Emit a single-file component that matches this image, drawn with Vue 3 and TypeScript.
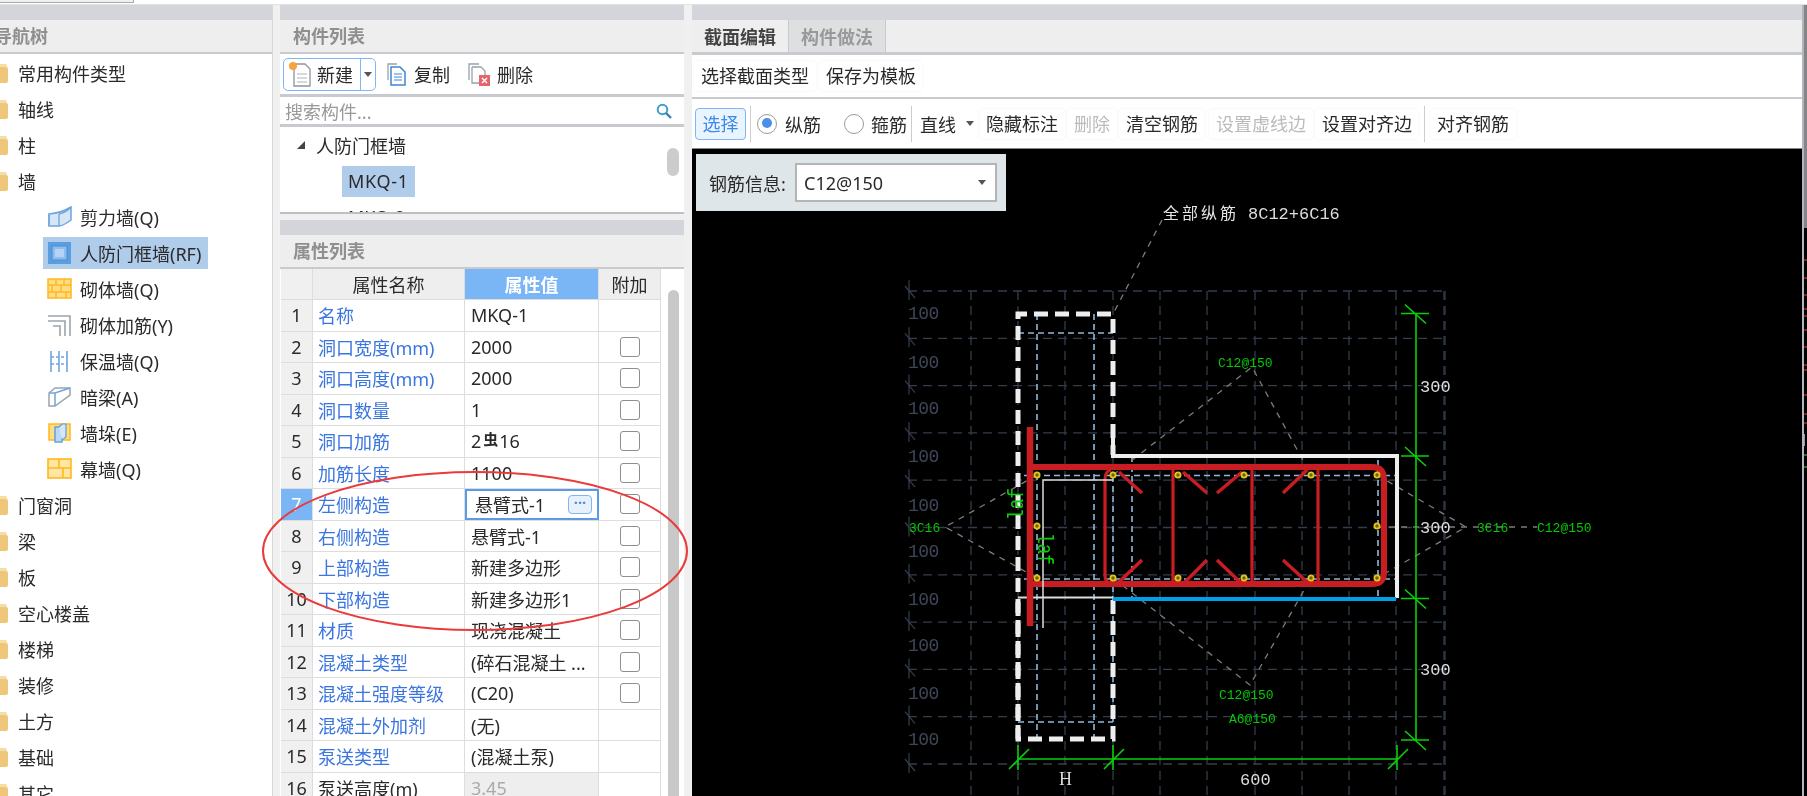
<template>
  <div class="root">
    <div class="top-strip"><div class="top-box"></div></div>
    <div class="main">
      <section class="panel nav-panel">
        <div class="bar"></div>
        <div class="head"><span class="title nav-title">导航树</span></div>
        <ul class="tree">
          <li v-for="item in tree" :key="item.label" class="tree-row" :class="{ child: item.icon }">
            <svg v-if="!item.icon" class="folder" width="18" height="20" viewBox="0 0 18 20">
              <path d="M1 1h14a2 2 0 0 1 2 2v1H1z" fill="#f6dca6" />
              <rect x="0" y="4" width="18" height="16" rx="2" fill="#efc77a" />
              <rect x="2" y="10" width="5" height="4" fill="#c9a050" />
            </svg>
            <span v-if="item.icon" class="child-wrap" :class="{ selected: item.selected }">
              <svg class="tree-icon" width="26" height="22" viewBox="0 0 26 22">
                <template v-if="item.icon === 'shear'">
                  <path d="M2 8q12-1 22-7v13q-8 6-12 6H2z" fill="#d6e6f6" stroke="#6fa5dc" stroke-width="1.5" />
                  <path d="M2 8v12M12 8v12M12 8q8-2 12-7" fill="none" stroke="#6fa5dc" stroke-width="1.3" />
                </template>
                <template v-else-if="item.icon === 'frame'">
                  <rect x="1" y="0" width="23" height="22" fill="#5a9ee2" />
                  <rect x="5" y="4" width="15" height="14" fill="#8dbdec" stroke="#4a8ed6" />
                  <rect x="8" y="7" width="9" height="8" fill="#b6d4f2" />
                </template>
                <template v-else-if="item.icon === 'brick'">
                  <rect x="1" y="1" width="23" height="19" fill="#ffdd85" stroke="#ffb81f" stroke-width="1.5" />
                  <path d="M1 7h23M1 14h23M9 1v6M17 1v6M5 7v7M14 7v7M9 14v6M19 14v6" stroke="#ffb81f" stroke-width="1.5" />
                </template>
                <template v-else-if="item.icon === 'rebar'">
                  <path d="M1 2h22v20M1 7h17v15M6 12h7v10" fill="none" stroke="#9aa4ad" stroke-width="1.6" />
                </template>
                <template v-else-if="item.icon === 'insul'">
                  <path d="M4 1v21M12 1v21M20 1v21" fill="none" stroke="#6fa5dc" stroke-width="1.6" />
                  <path d="M4 7h16M4 14h16" fill="none" stroke="#6fa5dc" stroke-width="1.4" stroke-dasharray="3 2" />
                </template>
                <template v-else-if="item.icon === 'beam'">
                  <path d="M2 7l6-5h15v7l-15 11H2z" fill="#fff" stroke="#9aa4ad" stroke-width="1.5" />
                  <path d="M2 7h6l15-5M8 7v13" fill="none" stroke="#6fa5dc" stroke-width="1.5" />
                </template>
                <template v-else-if="item.icon === 'pier'">
                  <rect x="2" y="2" width="21" height="16" fill="#ffdd85" stroke="#ffb81f" stroke-width="1.5" />
                  <rect x="8" y="5" width="7" height="15" fill="#bcd8f3" stroke="#5a9ee2" stroke-width="1.4" />
                  <path d="M12 5l3-3h4v13l-4 3" fill="#d6e6f6" stroke="#5a9ee2" stroke-width="1.2" />
                </template>
                <template v-else>
                  <rect x="1" y="1" width="23" height="19" fill="#ffe6a3" stroke="#ffb81f" stroke-width="1.6" />
                  <path d="M1 10h23M12 1v9M16 10v10" stroke="#ffb81f" stroke-width="1.6" />
                </template>
              </svg>
              <span>{{ item.label }}</span>
            </span>
            <span v-else>{{ item.label }}</span>
          </li>
        </ul>
      </section>

      <div class="mid-col">
        <section class="panel list-panel">
          <div class="bar"></div>
          <div class="head"><span class="title">构件列表</span></div>
          <div class="mid-tools">
            <div class="split-btn">
              <div class="split-main">
                <svg width="22" height="26" viewBox="0 0 22 26">
                  <path d="M5 3h11l5 5v17H5z" fill="#fff" stroke="#8d949b" stroke-width="1.3" />
                  <path d="M8 13h10M8 17h10M8 21h10" stroke="#c7ccd1" stroke-width="1.3" />
                  <circle cx="4" cy="5" r="4" fill="#f7a33c" />
                </svg>
                <span>新建</span>
              </div>
              <div class="split-arrow"><i class="caret"></i></div>
            </div>
            <div class="tool-btn copy-btn">
              <svg width="19" height="23" viewBox="0 0 19 23">
                <path d="M1 17V1h9" fill="none" stroke="#9aa1a8" stroke-width="1.3" />
                <path d="M4 4h9l5 5v13H4z" fill="#fff" stroke="#3f87d1" stroke-width="1.5" />
                <path d="M7 11h8M7 14h8M7 17h8" stroke="#3f87d1" stroke-width="1.2" />
              </svg>
              <span>复制</span>
            </div>
            <div class="tool-btn del-btn">
              <svg width="23" height="23" viewBox="0 0 23 23">
                <path d="M1 17V1h10" fill="none" stroke="#9aa1a8" stroke-width="1.3" />
                <path d="M4 4h9l4 4v6" fill="#fff" stroke="#9aa1a8" stroke-width="1.3" />
                <path d="M4 4v16h7" fill="none" stroke="#9aa1a8" stroke-width="1.3" />
                <rect x="11" y="12" width="11" height="11" fill="#e2666a" />
                <path d="M14 15l5 5M19 15l-5 5" stroke="#fff" stroke-width="1.4" />
              </svg>
              <span>删除</span>
            </div>
          </div>
          <div class="search">
            <span>搜索构件...</span>
            <svg width="16" height="16" viewBox="0 0 16 16">
              <circle cx="6.5" cy="6.5" r="4.8" fill="none" stroke="#3f9fc8" stroke-width="2" />
              <path d="M10 10l5 5" stroke="#3f7fa8" stroke-width="2.4" />
            </svg>
          </div>
          <div class="comp-list">
            <div class="comp-group"><i class="tri"></i>人防门框墙</div>
            <div class="comp-item"><span class="comp-sel">MKQ-1</span></div>
            <div class="comp-item"><span class="comp-plain">MKQ-2</span></div>
            <div class="comp-thumb"></div>
          </div>
        </section>

        <section class="panel prop-panel">
          <div class="bar"></div>
          <div class="head"><span class="title">属性列表</span></div>
          <div class="prop-body">
            <div class="prop-table">
              <div class="prop-row prop-header">
                <div class="cell num"></div>
                <div class="cell center">属性名称</div>
                <div class="cell center val-head">属性值</div>
                <div class="cell center">附加</div>
              </div>
              <div v-for="(row, i) in props" :key="row.name" class="prop-row">
                <div class="cell num" :class="{ 'num-active': i === 6 }">{{ i + 1 }}</div>
                <div class="cell name" :class="{ 'name-plain': i === 15 }">{{ row.name }}</div>
                <div v-if="i === 6" class="cell value-edit">
                  <span>{{ row.value }}</span>
                  <span class="more-btn">···</span>
                </div>
                <div v-else-if="i === 4" class="cell value">2<span class="bar-mark">虫</span>16</div>
                <div v-else class="cell value" :class="{ readonly: i === 15 }">{{ row.value }}</div>
                <div class="cell center"><i v-if="row.check" class="check"></i></div>
              </div>
            </div>
            <div class="prop-scroll"><div class="prop-thumb"></div></div>
          </div>
        </section>
      </div>

      <section class="panel edit-panel">
        <div class="bar"></div>
        <div class="head tabs">
          <div class="tab tab-on">截面编辑</div>
          <div class="tab tab-off">构件做法</div>
        </div>
        <div class="edit-tools-a">
          <div class="flat-btn">选择截面类型</div>
          <div class="flat-btn">保存为模板</div>
        </div>
        <div class="edit-tools-b">
          <div class="pick-btn">选择</div>
          <i class="sep sep-a"></i>
          <label class="radio radio-a"><i class="dot dot-on"></i>纵筋</label>
          <label class="radio radio-b"><i class="dot"></i>箍筋</label>
          <i class="sep sep-b"></i>
          <span class="line-pick">直线</span>
          <i class="caret caret-line"></i>
          <div class="flat-btn">隐藏标注</div>
          <div class="flat-btn off">删除</div>
          <div class="flat-btn">清空钢筋</div>
          <div class="flat-btn off wide-l">设置虚线边</div>
          <div class="flat-btn">设置对齐边</div>
          <i class="sep sep-c"></i>
          <div class="flat-btn last-btn">对齐钢筋</div>
        </div>
        <div class="canvas">
          <svg class="drawing" width="1110" height="647" viewBox="692 149 1110 647">
            <g stroke="#343d4c" stroke-width="1.3" stroke-dasharray="9 6" fill="none">
              <path v-for="y in gridY" :key="'h' + y" :d="`M908 ${y}H1445`" />
              <path v-for="x in gridX" :key="'v' + x" :d="`M${x} 291V796`" />
            </g>
            <g stroke="#343d4c" stroke-width="1.2">
              <path v-for="y in gridY" :key="'t' + y" :d="`M905 ${y - 5}L915 ${y + 7}M909 ${y - 11}V${y + 9}`" />
            </g>
            <text v-for="y in hundredY" :key="'l' + y" x="908" :y="y + 6" class="t-grid">100</text>

            <g fill="none" stroke="#8fb8dc" stroke-width="1.6" stroke-dasharray="6 4">
              <path d="M1037 314V739M1094 314V739M1018 333H1113M1018 722H1113" />
              <path d="M1024 475.5H1397M1024 579H1397M1113 476V739M1132 456V600M1378 460V600" />
            </g>

            <g fill="none" stroke="#7c7c7c" stroke-width="1.3" stroke-dasharray="6 6">
              <path d="M1162 220L1113 314" />
              <path d="M1113 475L1252 367L1311 475" />
              <path d="M1113 578L1250 685L1311 578" />
              <path d="M1037 475L945 527L1037 578" />
              <path d="M1377 475L1466 527L1377 578" />
              <path d="M1377 527H1537" />
            </g>

            <path d="M1018 739V314H1113V455" fill="none" stroke="#eee" stroke-width="5" stroke-dasharray="14 7" />
            <path d="M1113 600V739H1018V600" fill="none" stroke="#eee" stroke-width="5" stroke-dasharray="14 7" />
            <path d="M1113 437V456H1397V598" fill="none" stroke="#eee" stroke-width="4" />
            <path d="M1018 597.5H1113" stroke="#ddd" stroke-width="2" />
            <path d="M1113 599H1396" stroke="#00a0e9" stroke-width="4" />

            <g fill="none" stroke="#c81e23">
              <path d="M1030 427V626" stroke-width="6.5" />
              <path d="M1033 467H1372Q1384 467 1384 480V572Q1384 584 1372 584H1033" stroke-width="6" />
              <path d="M1111 470Q1105 471 1105 480V576Q1105 582 1111 584" stroke-width="3.2" />
              <path v-for="x in stirrupX" :key="'s' + x" :d="`M${x} 468V584`" stroke-width="3.2" />
              <path v-for="(d, i) in hooks" :key="'k' + i" :d="d" stroke-width="3.4" />
            </g>
            <path d="M1113 480H1043V628" fill="none" stroke="#ddd" stroke-width="1.5" />
            <circle
              v-for="(b, i) in bars"
              :key="'b' + i"
              :cx="b[0]"
              :cy="b[1]"
              r="2.6"
              fill="#6b5f10"
              stroke="#e6c619"
              stroke-width="1.8"
            />

            <g fill="none" stroke="#0ad00a" stroke-width="1.6">
              <path d="M1416 313V740M1018 759H1397" />
              <path v-for="y in [313.5, 456, 598.5, 740]" :key="'g' + y" :d="`M1401 ${y}H1429M1405 ${y - 9}L1426 ${y + 10}`" />
              <path v-for="x in [1018, 1113, 1397]" :key="'x' + x" :d="`M${x} 745V770M${x - 9} 769L${x + 11} 749`" />
            </g>

            <text x="1163" y="219" class="t-cn">全部纵筋</text>
            <text x="1248" y="219" class="t-dim">8C12+6C16</text>
            <text x="1059" y="785" class="t-dim t-serif">H</text>
            <text x="1240" y="785" class="t-dim">600</text>
            <text v-for="y in [392, 533, 675]" :key="'d' + y" x="1420" :y="y" class="t-dim">300</text>

            <text x="1218" y="367" class="t-green">C12@150</text>
            <text x="909" y="532" class="t-green">3C16</text>
            <text x="1477" y="532" class="t-green">3C16</text>
            <text x="1537" y="532" class="t-green">C12@150</text>
            <text x="1219" y="699" class="t-green">C12@150</text>
            <text x="1229" y="723" class="t-green">A6@150</text>
            <text class="t-laf" textLength="32" lengthAdjust="spacingAndGlyphs" transform="translate(1023 520) rotate(-90)">laf</text>
            <text class="t-laf" textLength="32" lengthAdjust="spacingAndGlyphs" transform="translate(1038 533) rotate(90)">laf</text>
          </svg>
          <div class="bar-info">
            <span class="info-label">钢筋信息:</span>
            <div class="info-select">
              <span>C12@150</span>
              <i class="caret"></i>
            </div>
          </div>
        </div>
      </section>

      <div class="edge">
        <div class="edge-top"></div>
        <svg class="edge-ticks" width="3" height="568" viewBox="0 228 3 568">
          <path v-for="y in edgeRed" :key="y" :d="`M0 ${y}H3`" stroke="#a8262b" stroke-width="1.5" />
          <path d="M0 455H3M0 467H3" stroke="#2f8f3f" stroke-width="1.5" />
          <path d="M0 434V446" stroke="#999" stroke-width="2" />
        </svg>
      </div>
    </div>

    <svg class="mark" width="1807" height="796" viewBox="0 0 1807 796">
      <ellipse cx="475" cy="551" rx="212" ry="79" fill="none" stroke="#ea3b3b" stroke-width="2" />
    </svg>
  </div>
</template>

<script setup lang="ts">
interface TreeItem {
  label: string
  icon?: string
  selected?: boolean
}

interface PropRow {
  name: string
  value: string
  check: boolean
}

const tree: TreeItem[] = [
  { label: '常用构件类型' },
  { label: '轴线' },
  { label: '柱' },
  { label: '墙' },
  { label: '剪力墙(Q)', icon: 'shear' },
  { label: '人防门框墙(RF)', icon: 'frame', selected: true },
  { label: '砌体墙(Q)', icon: 'brick' },
  { label: '砌体加筋(Y)', icon: 'rebar' },
  { label: '保温墙(Q)', icon: 'insul' },
  { label: '暗梁(A)', icon: 'beam' },
  { label: '墙垛(E)', icon: 'pier' },
  { label: '幕墙(Q)', icon: 'curtain' },
  { label: '门窗洞' },
  { label: '梁' },
  { label: '板' },
  { label: '空心楼盖' },
  { label: '楼梯' },
  { label: '装修' },
  { label: '土方' },
  { label: '基础' },
  { label: '其它' }
]

const props: PropRow[] = [
  { name: '名称', value: 'MKQ-1', check: false },
  { name: '洞口宽度(mm)', value: '2000', check: true },
  { name: '洞口高度(mm)', value: '2000', check: true },
  { name: '洞口数量', value: '1', check: true },
  { name: '洞口加筋', value: '', check: true },
  { name: '加筋长度', value: '1100', check: true },
  { name: '左侧构造', value: '悬臂式-1', check: true },
  { name: '右侧构造', value: '悬臂式-1', check: true },
  { name: '上部构造', value: '新建多边形', check: true },
  { name: '下部构造', value: '新建多边形1', check: true },
  { name: '材质', value: '现浇混凝土', check: true },
  { name: '混凝土类型', value: '(碎石混凝土 ...', check: true },
  { name: '混凝土强度等级', value: '(C20)', check: true },
  { name: '混凝土外加剂', value: '(无)', check: false },
  { name: '泵送类型', value: '(混凝土泵)', check: false },
  { name: '泵送高度(m)', value: '3.45', check: false }
]

const gridY = Array.from({ length: 11 }, (_, i) => Math.round((291 + i * 47.3) * 10) / 10)
const hundredY = [313, 362, 408, 456, 505, 551, 599, 645, 693, 739]
const gridX = [971, ...Array.from({ length: 10 }, (_, i) => Math.round(1018 + i * 47.3)), 1445]

const stirrupX = [1173, 1252, 1318]

const hooks = [
  'M1119 472L1142 493',
  'M1183 472L1207 493',
  'M1242 472L1217 493',
  'M1307 470L1283 493',
  'M1119 582L1142 560',
  'M1185 582L1207 560',
  'M1240 582L1217 560',
  'M1307 582L1283 560'
]

const bars: [number, number][] = [
  [1037, 475], [1113, 475], [1178, 475], [1244, 475], [1311, 475], [1377, 475],
  [1037, 526], [1377, 526],
  [1037, 578], [1113, 578], [1178, 578], [1244, 578], [1311, 578], [1377, 578]
]

const edgeRed = [260, 278, 295, 309, 316, 330, 347, 365, 370, 395, 414, 423]
</script>

<style scoped>
.root {
  position: relative;
  width: 1807px;
  height: 796px;
  overflow: hidden;
  display: flex;
  flex-direction: column;
  background: #f0f0f0;
  color: #2a2a2a;
  font-family: "Noto Sans", "Noto Sans CJK SC", sans-serif;
  font-size: 18px;
  filter: blur(0.45px);
}

.top-strip {
  height: 5px;
  flex: none;
  background: #fff;
  border-bottom: 1px solid #e2e2e2;
  box-sizing: border-box;
}

.top-box {
  width: 133px;
  height: 2px;
  background: #f0f0f0;
  border-bottom: 1px solid #aaa;
  border-right: 1px solid #aaa;
}

.main {
  flex: 1;
  min-height: 0;
  display: flex;
}

.panel {
  display: flex;
  flex-direction: column;
  background: #fff;
  min-height: 0;
}

.bar {
  height: 15px;
  flex: none;
  background: #d3d5da;
}

.head {
  height: 32px;
  flex: none;
  display: flex;
  align-items: center;
  background: #eee;
  border-bottom: 2px solid #c8cacf;
  box-sizing: content-box;
}

.title {
  margin-left: 13px;
  color: #8f8f8f;
  font-weight: 700;
  line-height: 32px;
}

.nav-title {
  margin-left: -6px;
}

.nav-panel {
  width: 273px;
  flex: none;
  border-right: 1px solid #d8d8d8;
  box-sizing: border-box;
  overflow: hidden;
}

.tree {
  list-style: none;
  margin: 0;
  padding: 1px 0 0;
}

.tree-row {
  height: 36px;
  display: flex;
  align-items: center;
  white-space: nowrap;
}

.folder {
  margin-left: -10px;
  margin-right: 10px;
  flex: none;
}

.child-wrap {
  display: flex;
  align-items: center;
  height: 32px;
  margin-left: 43px;
  padding: 0 7px 0 4px;
}

.child-wrap.selected {
  background: #b0cceb;
}

.tree-icon {
  margin-right: 7px;
  flex: none;
}

.mid-col {
  width: 404px;
  flex: none;
  margin-left: 7px;
  display: flex;
  flex-direction: column;
}

.list-panel {
  height: 209px;
  flex: none;
  border-bottom: 2px solid #bdbfc4;
  box-sizing: border-box;
  margin-bottom: 6px;
}

.mid-tools {
  height: 40px;
  flex: none;
  display: flex;
  align-items: center;
  padding-left: 3px;
  border-bottom: 3px solid #c8cacf;
}

.split-btn {
  width: 93px;
  height: 33px;
  display: flex;
  box-sizing: border-box;
  border: 1.5px solid #7db7f5;
  border-radius: 5px;
}

.split-main {
  width: 77px;
  display: flex;
  align-items: center;
  gap: 6px;
  padding-left: 5px;
  box-sizing: border-box;
  border-right: 1.5px solid #7db7f5;
}

.split-arrow {
  flex: 1;
  display: flex;
  align-items: center;
  justify-content: center;
}

.caret {
  display: inline-block;
  width: 0;
  height: 0;
  border-left: 4.5px solid transparent;
  border-right: 4.5px solid transparent;
  border-top: 5px solid #555;
}

.tool-btn {
  display: flex;
  align-items: center;
  height: 33px;
}

.copy-btn {
  margin-left: 11px;
  gap: 8px;
}

.del-btn {
  margin-left: 18px;
  gap: 6px;
}

.search {
  height: 27px;
  flex: none;
  display: flex;
  align-items: center;
  justify-content: space-between;
  padding: 0 12px 0 5px;
  color: #999;
  border-bottom: 3px solid #c8cacf;
}

.comp-list {
  position: relative;
  flex: 1;
  min-height: 0;
  overflow: hidden;
}

.comp-group {
  height: 36px;
  display: flex;
  align-items: center;
  padding-left: 17px;
}

.tri {
  width: 0;
  height: 0;
  margin-right: 11px;
  border-left: 8px solid transparent;
  border-bottom: 8px solid #444;
}

.comp-item {
  height: 36px;
  display: flex;
  align-items: center;
  padding-left: 62px;
}

.comp-sel {
  height: 31px;
  line-height: 31px;
  padding: 0 6px;
  background: #b0cceb;
  letter-spacing: 0.7px;
}

.comp-plain {
  padding: 0 6px;
}

.comp-thumb {
  position: absolute;
  left: 387px;
  top: 21px;
  width: 12px;
  height: 28px;
  border-radius: 6px;
  background: #ccc;
}

.prop-panel {
  flex: 1;
  min-height: 0;
}

.prop-body {
  flex: 1;
  min-height: 0;
  display: flex;
  overflow: hidden;
}

.prop-table {
  width: 380px;
  flex: none;
  margin-left: 1px;
}

.prop-row {
  display: grid;
  grid-template-columns: 32px 152px 134px 62px;
  height: 31.5px;
  box-sizing: border-box;
  border-bottom: 1.5px solid #ddd;
}

.prop-header {
  height: 31px;
  background: #eee;
}

.cell {
  display: flex;
  align-items: center;
  min-width: 0;
  white-space: nowrap;
  border-right: 1.5px solid #ddd;
  box-sizing: border-box;
}

.center {
  justify-content: center;
}

.val-head {
  background: #7ab5f5;
  color: #fff;
  font-weight: 700;
}

.num {
  justify-content: center;
  background: #f0f0f0;
}

.num-active {
  background: #7ab5f5;
  color: #fff;
}

.name {
  padding-left: 5px;
  color: #3a75e0;
}

.name-plain {
  color: #2a2a2a;
}

.value {
  padding-left: 6px;
}

.readonly {
  background: #eee;
  color: #aaa;
}

.value-edit {
  justify-content: space-between;
  padding: 0 5px 0 8px;
  border: 2px solid #5a9be8;
}

.more-btn {
  width: 22px;
  height: 17px;
  line-height: 12px;
  text-align: center;
  font-size: 15px;
  font-weight: 700;
  color: #4a8ed6;
  background: #e6f1fc;
  border: 1px solid #7db7f5;
  border-radius: 4px;
}

.bar-mark {
  margin: -6px 1px 0 2px;
  font-size: 15px;
  font-weight: 700;
}

.check {
  width: 20px;
  height: 20px;
  box-sizing: border-box;
  border: 1.5px solid #8e8e8e;
  border-radius: 3px;
  background: #fff;
}

.prop-scroll {
  flex: 1;
  padding: 21px 5px 0 7px;
}

.prop-thumb {
  height: 100%;
  border-radius: 6px 6px 0 0;
  background: #c8c8c8;
}

.edit-panel {
  width: 1110px;
  flex: none;
  margin-left: 8px;
}

.tabs {
  align-items: stretch;
  border-bottom-width: 3px;
}

.tab {
  width: 96px;
  display: flex;
  align-items: center;
  justify-content: center;
  font-weight: 700;
  border-right: 1.5px solid #c8cacf;
}

.tab-on {
  color: #444;
}

.tab-off {
  color: #999;
  background: #dedfe1;
}

.edit-tools-a {
  height: 42px;
  flex: none;
  display: flex;
  align-items: center;
  gap: 3px;
  padding-left: 2px;
  border-bottom: 2px solid #c8cacf;
}

.flat-btn {
  height: 30px;
  line-height: 30px;
  padding: 0 7px;
  flex: none;
  border-radius: 3px;
  box-shadow: 0 0 0 1px #fafafa;
}

.off {
  color: #bbb;
}

.wide-l {
  margin-left: 2px;
}

.edit-tools-b {
  height: 49px;
  flex: none;
  display: flex;
  align-items: center;
  gap: 2px;
  padding-left: 3px;
  border-bottom: 1px solid #888;
}

.pick-btn {
  width: 51px;
  height: 32px;
  line-height: 30px;
  text-align: center;
  box-sizing: border-box;
  color: #3d8ae8;
  background: #eaf4ff;
  border: 1.5px solid #7db7f5;
  border-radius: 4px;
}

.sep {
  width: 1px;
  height: 36px;
  flex: none;
  background: #ccc;
}

.sep-a {
  margin-left: 2px;
}

.sep-b {
  margin-left: 2px;
}

.sep-c {
  margin-left: 3px;
}

.radio {
  display: flex;
  align-items: center;
}

.radio-a {
  margin-left: 4px;
  gap: 8px;
}

.radio-b {
  margin-left: 21px;
  gap: 7px;
}

.dot {
  position: relative;
  width: 20px;
  height: 20px;
  box-sizing: border-box;
  border: 1.5px solid #9a9a9a;
  border-radius: 50%;
}

.dot-on::after {
  content: "";
  position: absolute;
  left: 3.5px;
  top: 3.5px;
  width: 10px;
  height: 10px;
  border-radius: 50%;
  background: #4a90e8;
}

.line-pick {
  margin-left: 6px;
}

.caret-line {
  margin: 0 3px 0 8px;
}

.last-btn {
  margin-left: 3px;
}

.canvas {
  position: relative;
  flex: 1;
  min-height: 0;
  overflow: hidden;
  background: #000;
}

.drawing {
  display: block;
}

.t-grid {
  fill: #3e4757;
  font: 18px "Liberation Mono", monospace;
  letter-spacing: -0.5px;
}

.t-cn {
  fill: #e6e6e6;
  font: 16px "Noto Sans CJK SC", sans-serif;
  letter-spacing: 3px;
}

.t-dim {
  fill: #ddd;
  font: 17px "Liberation Mono", monospace;
}

.t-serif {
  font-family: "Liberation Serif", serif;
  font-size: 18px;
}

.t-green {
  fill: #0c0;
  font: 13px "Liberation Mono", monospace;
}

.t-laf {
  fill: #0ad00a;
  font: 22px "Liberation Mono", monospace;
}

.bar-info {
  position: absolute;
  left: 4px;
  top: 5px;
  width: 310px;
  height: 57px;
  display: flex;
  align-items: center;
  box-sizing: border-box;
  padding-left: 13px;
  background: #dfe6e9;
}

.info-label {
  width: 86px;
  flex: none;
}

.info-select {
  width: 202px;
  height: 39px;
  box-sizing: border-box;
  display: flex;
  align-items: center;
  justify-content: space-between;
  padding: 0 9px 0 7px;
  background: #fff;
  border: 2px solid #b5b5b5;
}

.edge {
  flex: 1;
  display: flex;
  flex-direction: column;
  background: #000;
  border-left: 2px solid #b0b5c0;
}

.edge-top {
  height: 223px;
  flex: none;
  background: #858585;
}

.edge-ticks {
  display: block;
}

.mark {
  position: absolute;
  left: 0;
  top: 0;
  pointer-events: none;
}
</style>
